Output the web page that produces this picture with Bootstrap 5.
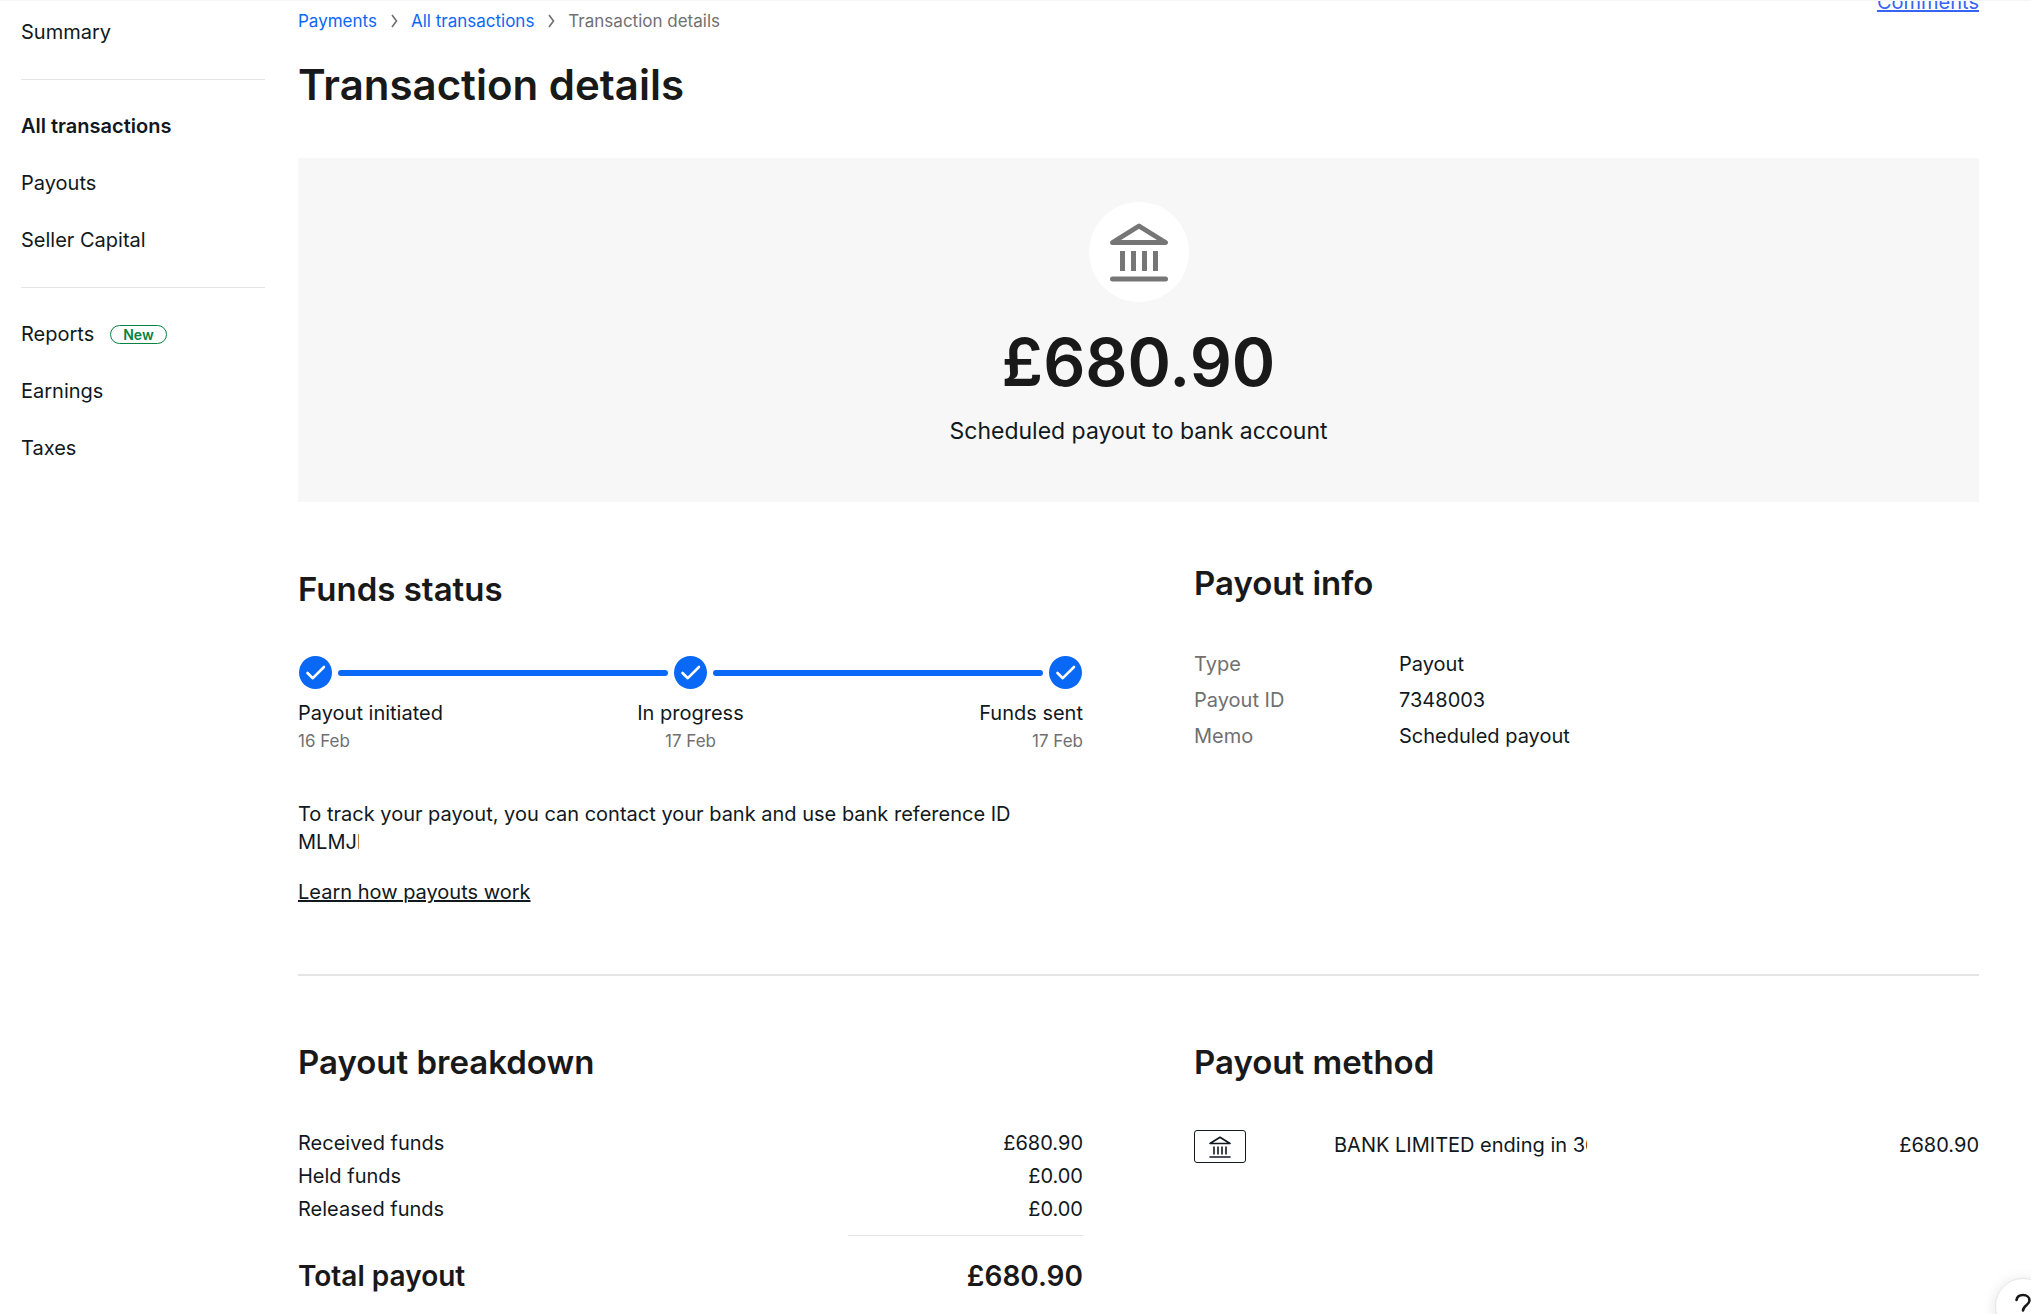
<!DOCTYPE html>
<html lang="en">
<head>
<meta charset="utf-8">
<meta name="viewport" content="width=device-width, initial-scale=1">
<title>Transaction details</title>
<link rel="stylesheet" href="https://cdn.jsdelivr.net/npm/bootstrap@5.3.0/dist/css/bootstrap.min.css">
<style>
  body { font-family: Inter, "Liberation Sans", sans-serif; font-size: 20px; line-height: 28px; color: #111820; border-top: 1px solid #f5f5f5; }
  .side { width: 265px; flex: none; padding: 3px 0 0 21px; }
  .side .nav-link { color: #111820; padding: 14px 0; line-height: 29px; }
  .side .nav-link.active { font-weight: 600; }
  .rule { border: 0; border-top: 1px solid #e5e5e5; opacity: 1; margin: 18px 0; }
  .new-pill { border: 1px solid #05823f; color: #05823f; border-radius: 10px; font-size: 14px; font-weight: 600; line-height: 17px; padding: 0 12px; margin-left: 16px; }
  .content { padding: 8px 52px 0 33px; min-width: 0; }
  .crumbs { font-size: 17px; line-height: 24px; gap: 13px; color: #707070; }
  .crumbs a { color: #0968f6; text-decoration: none; }
  .crumbs li { gap: 14px; }
  .comments { top: -13px; right: 52px; color: #3665f3; }
  h1, h2, .amount, .total { color: #191919; font-weight: 600; margin: 0; }
  h1 { font-size: 42px; line-height: 48px; padding: 28px 0 49px; }
  h2 { font-size: 33px; line-height: 40px; }
  .hero { background: #f7f7f7; padding: 44px 0 55px; }
  .hero-icon { width: 100px; height: 100px; background: #fff; }
  .amount { font-size: 66px; line-height: 80px; margin-top: 20px; }
  .caption { font-size: 23px; line-height: 32px; margin-top: 13px; }
  .halves { --bs-gutter-x: 111px; }
  .status { padding-top: 67px; }
  .info { padding-top: 61px; }
  .track { margin: 47px 1px 10px; gap: 6px; }
  .track span { height: 6px; border-radius: 3px; background: #0968f6; }
  .quiet { color: #707070; }
  .date { font-size: 17px; }
  .note { margin: 45px 0 22px; }
  .cut { overflow: hidden; white-space: nowrap; }
  .ref { width: 61px; }
  .dark-link { color: #111820; }
  .info dl { margin: 43px 0 0; line-height: 36px; }
  .info dt { width: 205px; font-weight: 400; }
  .divide { border: 0; border-top: 2px solid #e5e5e5; opacity: 1; margin: 68px 0 66px; }
  .funds { width: 100%; margin-top: 45px; line-height: 33px; }
  .funds th { font-weight: 400; }
  .funds th, .funds td { padding: 0; }
  .sum-rule { border: 0; border-top: 1px solid #e5e5e5; opacity: 1; width: 30%; margin: 9px 0 22px auto; }
  .total { font-size: 28px; line-height: 36px; }
  .method { margin-top: 48px; line-height: 31px; }
  .bank-box { width: 52px; height: 33px; border: 1px solid #111820; border-radius: 3px; margin-right: 88px; }
  .bank-name { width: 253px; }
  .help { right: -20px; bottom: -20px; width: 56px; height: 56px; background: #fff; border: 1px solid #e5e5e5; box-shadow: 0 2px 14px rgba(0,0,0,.12); }
</style>
<script src="https://cdn.jsdelivr.net/npm/bootstrap@5.3.0/dist/js/bootstrap.bundle.min.js"></script>
</head>
<body>
<svg class="d-none" aria-hidden="true">
  <symbol id="tick" viewBox="0 0 33 33"><circle cx="16.500" cy="16.500" r="16.500" fill="#0968f6"/><path d="M8.500 17l5.300 5.200L25 11" fill="none" stroke="#fff" stroke-width="2.600" stroke-linecap="round" stroke-linejoin="round"/></symbol>
  <symbol id="chev" viewBox="0 0 7 14"><path d="M1 1l4.500 6L1 13" fill="none" stroke="#707070" stroke-width="1.600"/></symbol>
</svg>
<div class="d-flex position-relative">
  <nav class="side" aria-label="Payments">
    <div class="nav flex-column">
      <a class="nav-link" href="#">Summary</a>
      <hr class="rule">
      <a class="nav-link active" href="#">All transactions</a>
      <a class="nav-link" href="#">Payouts</a>
      <a class="nav-link" href="#">Seller Capital</a>
      <hr class="rule">
      <a class="nav-link d-flex align-items-center" href="#">Reports <span class="new-pill">New</span></a>
      <a class="nav-link" href="#">Earnings</a>
      <a class="nav-link" href="#">Taxes</a>
    </div>
  </nav>
  <main class="content flex-grow-1">
    <a class="comments position-absolute" href="#">Comments</a>
    <nav aria-label="Breadcrumb">
      <ol class="crumbs list-unstyled d-flex mb-0">
        <li class="d-flex align-items-center"><a href="#">Payments</a><svg width="7" height="14"><use href="#chev"/></svg></li>
        <li class="d-flex align-items-center"><a href="#">All transactions</a><svg width="7" height="14"><use href="#chev"/></svg></li>
        <li>Transaction details</li>
      </ol>
    </nav>
    <h1>Transaction details</h1>
    <section class="hero text-center d-flex flex-column align-items-center">
      <div class="hero-icon rounded-circle d-flex align-items-center justify-content-center">
        <svg width="60" height="60" viewBox="0 0 60 60" fill="none" stroke="#767676" stroke-width="5" stroke-linecap="round" stroke-linejoin="round"><path d="M3.500 20.500L30 4l26.500 16.500zM3.500 57h53"/><path d="M13.500 29v20M24.500 29v20M35.500 29v20M46.500 29v20" stroke-linecap="butt"/></svg>
      </div>
      <div class="amount">£680.90</div>
      <div class="caption">Scheduled payout to bank account</div>
    </section>
    <div class="row halves">
      <section class="col-6 status">
        <h2>Funds status</h2>
        <div class="track d-flex align-items-center">
          <svg width="33" height="33"><use href="#tick"/></svg><span class="flex-grow-1"></span>
          <svg width="33" height="33"><use href="#tick"/></svg><span class="flex-grow-1"></span>
          <svg width="33" height="33"><use href="#tick"/></svg>
        </div>
        <div class="row gx-0">
          <div class="col-4">Payout initiated<div class="quiet date">16 Feb</div></div>
          <div class="col-4 text-center">In progress<div class="quiet date">17 Feb</div></div>
          <div class="col-4 text-end">Funds sent<div class="quiet date">17 Feb</div></div>
        </div>
        <p class="note">To track your payout, you can contact your bank and use bank reference ID<br><span class="cut ref d-block">MLMJI</span></p>
        <a class="dark-link" href="#">Learn how payouts work</a>
      </section>
      <section class="col-6 info">
        <h2>Payout info</h2>
        <dl>
          <div class="d-flex"><dt class="quiet">Type</dt><dd class="mb-0">Payout</dd></div>
          <div class="d-flex"><dt class="quiet">Payout ID</dt><dd class="mb-0">7348003</dd></div>
          <div class="d-flex"><dt class="quiet">Memo</dt><dd class="mb-0">Scheduled payout</dd></div>
        </dl>
      </section>
    </div>
    <hr class="divide">
    <div class="row halves">
      <section class="col-6">
        <h2>Payout breakdown</h2>
        <table class="funds">
          <tr><th scope="row">Received funds</th><td class="text-end">£680.90</td></tr>
          <tr><th scope="row">Held funds</th><td class="text-end">£0.00</td></tr>
          <tr><th scope="row">Released funds</th><td class="text-end">£0.00</td></tr>
        </table>
        <hr class="sum-rule">
        <div class="total d-flex justify-content-between"><span>Total payout</span><span>£680.90</span></div>
      </section>
      <section class="col-6">
        <h2>Payout method</h2>
        <div class="method d-flex">
          <div class="bank-box d-flex align-items-center justify-content-center">
            <svg width="22" height="22" viewBox="0 0 22 22" fill="none" stroke="#111820" stroke-width="1.600" stroke-linecap="round" stroke-linejoin="round"><path d="M1 7.500L11 1.300 21 7.500zM1 21h20"/><path d="M5 10.500v8M9 10.500v8M13 10.500v8M17 10.500v8" stroke-linecap="butt"/></svg>
          </div>
          <div class="bank-name cut">BANK LIMITED ending in 36</div>
          <div class="ms-auto">£680.90</div>
        </div>
      </section>
    </div>
  </main>
</div>
<button type="button" class="help position-fixed rounded-circle p-0 d-flex align-items-center justify-content-center" aria-label="Help">
  <svg width="18" height="26" viewBox="0 0 18 26" fill="none" stroke="#191919" stroke-width="2.600" stroke-linecap="round"><path d="M2.500 7C3 3.500 5.500 2 9 2c4 0 6.500 2.500 6.500 5.500 0 4.500-6.500 5-6.500 10"/><circle cx="9" cy="23.500" r=".6"/></svg>
</button>
</body>
</html>
